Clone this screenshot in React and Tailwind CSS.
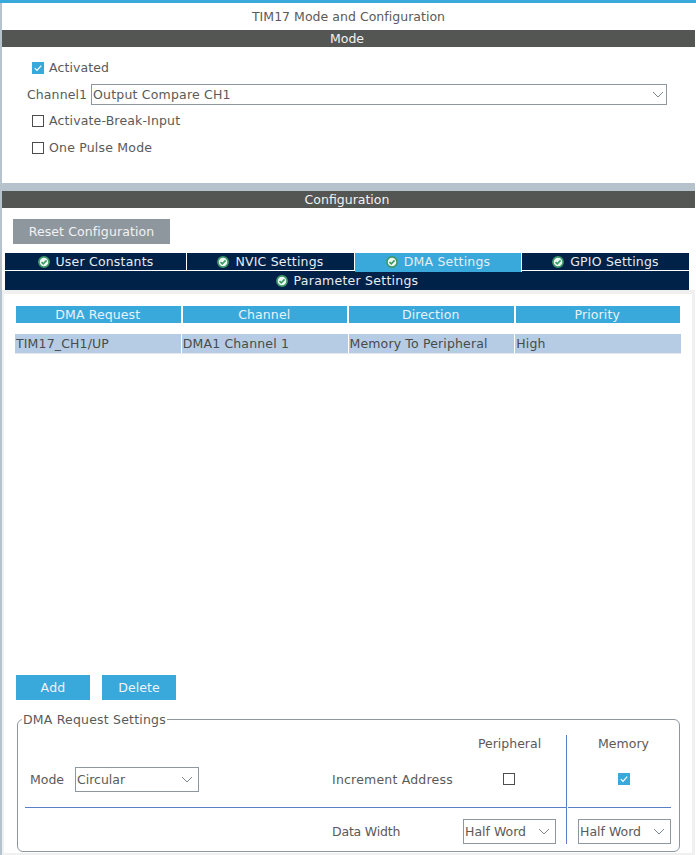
function CheckIcon() {
  return (
    <svg width="12" height="12" viewBox="0 0 12 12" className="shrink-0">
      <circle cx="6" cy="6" r="5.1" fill="#eef7f1" stroke="#3c9a68" strokeWidth="1.7" />
      <path d="M3.5 6.1 5.3 7.9 8.6 4.4" fill="none" stroke="#3c9a68" strokeWidth="1.6" />
    </svg>
  );
}

function Chevron() {
  return (
    <svg width="12" height="7" viewBox="0 0 12 7" className="shrink-0">
      <path d="M1 1 6 6 11 1" fill="none" stroke="#7d858c" strokeWidth="1" />
    </svg>
  );
}

function Checkbox({ checked }) {
  if (checked) {
    return (
      <span className="flex h-3 w-3 shrink-0 items-center justify-center bg-[#39a9db]">
        <svg width="10" height="10" viewBox="0 0 10 10">
          <path d="M1.8 5.2 4 7.4 8.2 2.6" fill="none" stroke="#fff" strokeWidth="1.2" />
        </svg>
      </span>
    );
  }
  return <span className="h-3 w-3 shrink-0 border border-[#4d4d4d] bg-white" />;
}

function Select({ value, className }) {
  return (
    <div className={`flex items-center justify-between border border-[#8f979e] bg-white pl-[1px] ${className}`}>
      <span>{value}</span>
      <Chevron />
    </div>
  );
}

function SectionBar({ children }) {
  return <div className="flex h-[17px] items-center justify-center bg-[#545654] pr-[3px] text-[#f2f2f2]">{children}</div>;
}

function Tab({ label, active, className }) {
  return (
    <div
      className={`flex items-center justify-center gap-[6px] tracking-[0.2px] text-[#e8edf2] ${
        active ? "relative h-[19px] bg-[#39a9db] pb-[2px]" : "h-[17px] bg-[#002148]"
      } ${className}`}
    >
      <CheckIcon />
      <span>{label}</span>
    </div>
  );
}

const headers = ["DMA Request", "Channel", "Direction", "Priority"];
const cells = ["TIM17_CH1/UP", "DMA1 Channel 1", "Memory To Peripheral", "High"];

export default function App() {
  return (
    <div
      className="flex h-[855px] w-[696px] flex-col overflow-hidden bg-white text-[12.5px] leading-[15px] text-[#5a5a5a]"
      style={{ fontFamily: '"DejaVu Sans", sans-serif' }}
    >
      <div className="h-[3px] shrink-0 bg-[#39a9db]" />
      <div className="flex flex-1 flex-col border-l-[2px] border-r border-l-[#b6c2cc] border-r-white">
        <div className="flex h-[27px] items-center justify-center bg-white tracking-[0.03px]">
          TIM17 Mode and Configuration
        </div>
        <SectionBar>Mode</SectionBar>

        <div className="h-[136px] bg-white pl-[25px] pt-[13px]">
          <label className="ml-[5px] flex h-[15px] items-center gap-[5px] tracking-[0.1px]">
            <Checkbox checked />
            Activated
          </label>
          <div className="mt-[9px] flex items-center">
            <span className="w-[64px] tracking-[0.1px]">Channel1</span>
            <Select value="Output Compare CH1" className="h-[21px] w-[576px] pr-[2px] tracking-[0.2px]" />
          </div>
          <label className="ml-[5px] mt-[8px] flex h-[15px] items-center gap-[5px] tracking-[0.15px]">
            <Checkbox />
            Activate-Break-Input
          </label>
          <label className="ml-[5px] mt-[12px] flex h-[15px] items-center gap-[5px] tracking-[0.2px]">
            <Checkbox />
            One Pulse Mode
          </label>
        </div>

        <div className="h-[8px] bg-[#b6c2cc]" />
        <SectionBar>Configuration</SectionBar>

        <div className="flex flex-1 flex-col bg-white">
          <div className="pl-[11px] pt-[11px]">
            <button className="flex h-[25px] w-[157px] items-center justify-center bg-[#8f979e] tracking-[0.1px] text-[#f2f2f2]">
              Reset Configuration
            </button>
          </div>

          <div className="mt-[9px] pl-[3px] pr-[6px]">
            <div className="flex h-[18px] items-start border-b border-white">
              <Tab label="User Constants" className="w-[182px] border-r border-white" />
              <Tab label="NVIC Settings" className="w-[168px] border-r border-white" />
              <Tab label="DMA Settings" active className="w-[167px] border-r border-white" />
              <Tab label="GPIO Settings" className="w-[167px]" />
            </div>
            <div className="flex h-[19px] items-center justify-center gap-[6px] bg-[#002148] tracking-[0.25px] text-[#e8edf2]">
              <CheckIcon />
              <span>Parameter Settings</span>
            </div>
          </div>

          <div className="flex flex-1 flex-col border-t-[4px] border-r-[3px] border-b-[2px] border-l-[2px] border-[#f0f0f0] pl-[11px] pr-[11px] pt-[12px]">
            <div className="ml-px mr-px grid grid-cols-4 gap-[2px]">
              {headers.map((h) => (
                <div key={h} className="flex h-[17px] items-center justify-center bg-[#39a9db] pr-px tracking-[0.1px] text-[#e8f2f8]">
                  {h}
                </div>
              ))}
            </div>
            <div className="mt-[11px] grid h-[20px] grid-cols-4 gap-[1px] border-b border-[#e4e8ee] bg-white">
              {cells.map((c) => (
                <div key={c} className="flex items-center bg-[#b6cce4] pl-px tracking-[0.15px] text-[#4a4a4a]">
                  {c}
                </div>
              ))}
            </div>

            <div className="mt-[321px] flex gap-[12px] pl-[1px]">
              <button className="h-[25px] w-[74px] bg-[#39a9db] tracking-[0.2px] text-[#f2f2f2]">Add</button>
              <button className="h-[25px] w-[74px] bg-[#39a9db] tracking-[0.1px] text-[#f2f2f2]">Delete</button>
            </div>

            <fieldset className="ml-[2px] mt-[12px] h-[140px] w-[663px] rounded-[6px] border border-[#8f979e] pl-[7px] pr-[7px]">
              <legend className="-ml-[3px] px-px tracking-[0.2px]">DMA Request Settings</legend>
              <div className="mt-[8px] flex h-[109px]">
                <div className="flex w-[542px] flex-col border-r border-[#5b7fc7]">
                  <div className="flex h-[32px] justify-end pr-[10px] pt-px">
                    <span className="w-[93px] text-center">Peripheral</span>
                  </div>
                  <div className="flex h-[41px] items-start border-b border-[#5b7fc7] pl-[5px]">
                    <span className="mt-[5px] w-[45px]">Mode</span>
                    <Select value="Circular" className="h-[25px] w-[124px] pr-[5px]" />
                    <span className="ml-[133px] mt-[5px] w-[171px] tracking-[0.2px]">Increment Address</span>
                    <span className="mt-[6px] flex w-[12px]">
                      <Checkbox />
                    </span>
                  </div>
                  <div className="flex flex-1 items-end pl-[307px]">
                    <span className="mb-[5px] w-[131px] tracking-[-0.2px]">Data Width</span>
                    <Select value="Half Word" className="h-[25px] w-[93px] pr-[5px]" />
                  </div>
                </div>
                <div className="ml-px flex w-[103px] flex-col">
                  <div className="h-[32px] pl-[8px] pt-px text-center">Memory</div>
                  <div className="flex h-[41px] items-start justify-center border-b border-[#5b7fc7] pl-[8px] pt-[6px]">
                    <Checkbox checked />
                  </div>
                  <div className="flex flex-1 items-end justify-end">
                    <Select value="Half Word" className="h-[25px] w-[93px] pr-[5px]" />
                  </div>
                </div>
              </div>
            </fieldset>
          </div>
        </div>
      </div>
    </div>
  );
}
